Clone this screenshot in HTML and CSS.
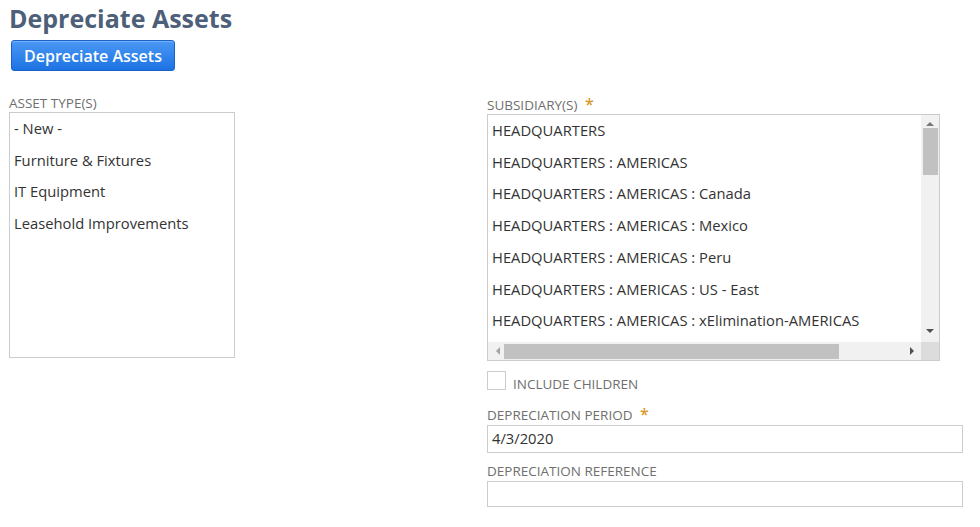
FILE: index.html
```html
<!DOCTYPE html>
<html>
<head>
<meta charset="utf-8">
<link rel="stylesheet" href="styles.css">
</head>
<body>
<div class="page">
  <h1 class="title">Depreciate Assets</h1>
  <div class="actions"><button class="btn-primary">Depreciate Assets</button></div>
  <div class="form">
    <div class="col-left">
      <div class="label">ASSET TYPE(S)</div>
      <div class="listbox asset-list">
        <div class="opt">- New -</div>
        <div class="opt">Furniture &amp; Fixtures</div>
        <div class="opt">IT Equipment</div>
        <div class="opt">Leasehold Improvements</div>
      </div>
    </div>
    <div class="col-right">
      <div class="label">SUBSIDIARY(S) <span class="req">*</span></div>
      <div class="listbox sub-list">
        <div class="sub-items">
          <div class="opt">HEADQUARTERS</div>
          <div class="opt">HEADQUARTERS : AMERICAS</div>
          <div class="opt">HEADQUARTERS : AMERICAS : Canada</div>
          <div class="opt">HEADQUARTERS : AMERICAS : Mexico</div>
          <div class="opt">HEADQUARTERS : AMERICAS : Peru</div>
          <div class="opt">HEADQUARTERS : AMERICAS : US - East</div>
          <div class="opt">HEADQUARTERS : AMERICAS : xElimination-AMERICAS</div>
        </div>
        <div class="vbar">
          <span class="arr arr-up"></span>
          <span class="vthumb"></span>
          <span class="vspace"></span>
          <span class="arr arr-down"></span>
        </div>
        <div class="hbar">
          <span class="arr arr-left"></span>
          <span class="hthumb"></span>
          <span class="hspace"></span>
          <span class="arr arr-right"></span>
        </div>
        <div class="corner"></div>
      </div>
      <label class="check-row"><span class="checkbox"></span><span class="check-label">INCLUDE CHILDREN</span></label>
      <div class="label label-period">DEPRECIATION PERIOD <span class="req">*</span></div>
      <div class="input input-period">4/3/2020</div>
      <div class="label label-ref">DEPRECIATION REFERENCE</div>
      <div class="input input-ref"></div>
    </div>
  </div>
</div>
</body>
</html>
```

FILE: styles.css
```css
* { box-sizing: border-box; }
html, body { margin: 0; padding: 0; background: #fff; }
body { font-family: "Open Sans", "Liberation Sans", sans-serif; color: #333; }
.page { padding: 0 0 0 9px; width: 980px; }
.title {
  margin: 0;
  font-size: 25px;
  line-height: 36px;
  font-weight: 700;
  color: #4d5f79;
}
.actions { padding: 4px 0 0 2px; }
.btn-primary {
  font-family: "Open Sans", sans-serif;
  font-weight: 600;
  font-size: 16px;
  color: #fff;
  height: 31px;
  width: 164px;
  padding: 0;
  border: 1px solid #1862c9;
  border-radius: 3px;
  background: linear-gradient(#4a98f5, #1d73e3);
  box-shadow: inset 0 1px 0 rgba(255,255,255,0.25);
}
.form { display: flex; margin-top: 24px; }
.col-left { width: 226px; }
.col-right { width: 476px; margin-left: 252px; margin-top: 1px; }
.label { font-size: 13.5px; line-height: 16px; color: #6f6f6f; white-space: nowrap; }
.req { color: #d89a2a; font-size: 16px; font-weight: 600; margin-left: 4px; line-height: 16px; }
.listbox { border: 1px solid #ccc; background: #fff; }
.asset-list { height: 246px; margin-top: 1px; padding-top: 0; }
.opt { font-size: 14.75px; line-height: 31.7px; padding-left: 4px; color: #333; white-space: nowrap; }
.sub-list {
  width: 453px;
  height: 247px;
  margin-top: 1px;
  display: grid;
  grid-template-columns: 1fr 18px;
  grid-template-rows: 1fr 18px;
  overflow: hidden;
}
.sub-items { overflow: hidden; }
.vbar { background: #f1f1f1; display: flex; flex-direction: column; align-items: center; }
.vthumb { width: 15px; height: 47px; background: #c1c1c1; margin-top: 2px; }
.vspace { flex: 1; }
.hbar { background: #f1f1f1; display: flex; align-items: center; }
.hthumb { height: 15px; width: 335px; background: #c1c1c1; margin-left: 4px; }
.hspace { flex: 1; }
.corner { background: #dcdcdc; }
.arr { width: 0; height: 0; display: block; }
.arr-up { margin-top: 7px; border-left: 4px solid transparent; border-right: 4px solid transparent; border-bottom: 4px solid #777; }
.arr-down { margin-bottom: 9px; border-left: 4px solid transparent; border-right: 4px solid transparent; border-top: 4px solid #505050; }
.arr-left { margin-left: 8px; border-top: 4px solid transparent; border-bottom: 4px solid transparent; border-right: 4px solid #a3a3a3; }
.arr-right { margin-right: 7px; border-top: 4px solid transparent; border-bottom: 4px solid transparent; border-left: 4px solid #505050; }
.check-row { display: flex; align-items: center; margin-top: 10px; height: 19px; }
.checkbox { width: 19px; height: 19px; border: 1px solid #ccc; background: #fff; display: block; }
.check-label { font-size: 13.5px; color: #6f6f6f; margin-left: 7px; padding-top: 6px; }
.label-period { margin-top: 16px; }
.label-ref { margin-top: 10px; }
.input {
  width: 476px;
  border: 1px solid #ccc;
  font-size: 14.75px;
  line-height: 25px;
  padding-left: 4px;
  color: #333;
}
.input-period { height: 28px; margin-top: 2px; }
.input-ref { height: 26px; margin-top: 2px; }
```
